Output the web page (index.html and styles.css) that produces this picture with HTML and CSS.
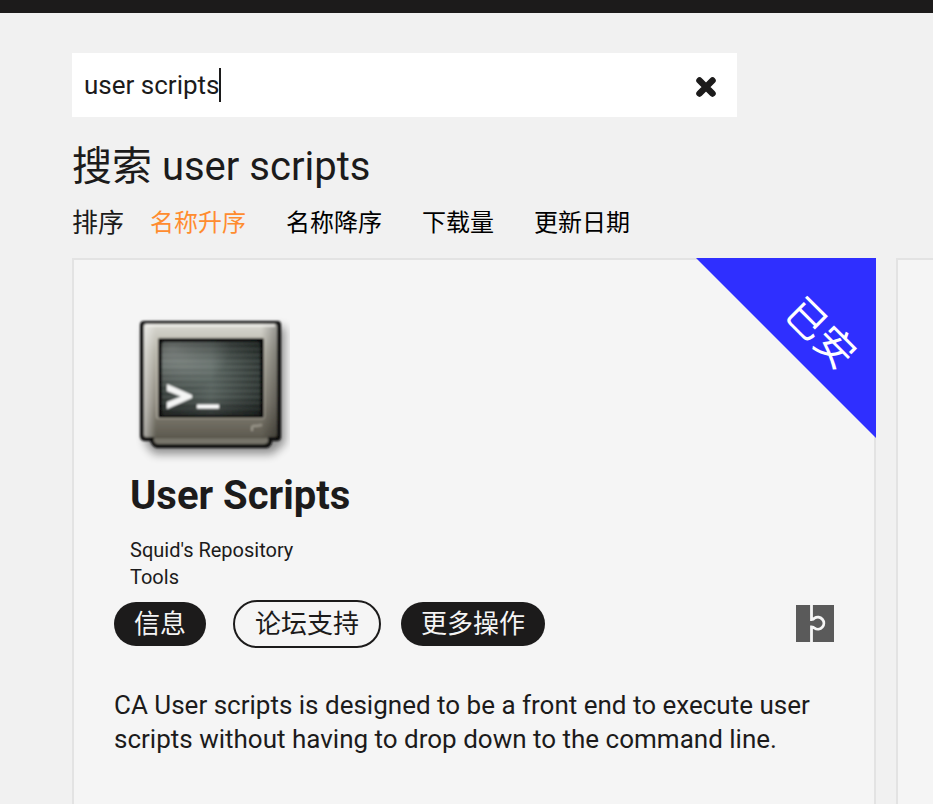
FILE: index.html
```html
<!DOCTYPE html>
<html lang="zh-CN">
<head>
<meta charset="utf-8">
<title>搜索 user scripts</title>
<link rel="stylesheet" href="styles.css">
</head>
<body>
<header class="topbar"></header>
<main class="page">
  <form class="search">
    <input class="search-input" type="text" value="user scripts" aria-label="搜索">
    <span class="caret"></span>
    <button class="clear" type="button" aria-label="清除">
      <svg viewBox="0 0 20 20" width="20" height="20"><path d="M3.500 3.500L16.500 16.500M16.500 3.500L3.500 16.500" stroke="currentColor" stroke-width="6.500" stroke-linecap="round"/></svg>
    </button>
  </form>
  <h1 class="title">搜索 user scripts</h1>
  <nav class="sort">
    <span class="sort-label">排序</span>
    <a class="sort-link active" href="#">名称升序</a>
    <a class="sort-link" href="#">名称降序</a>
    <a class="sort-link" href="#">下载量</a>
    <a class="sort-link" href="#">更新日期</a>
  </nav>
  <section class="cards">
    <article class="card">
      <div class="ribbon"><span class="ribbon-text">已安</span></div>
      <div class="summary">
        <svg class="app-icon" viewBox="0 0 160 160" width="160" height="160" aria-hidden="true">
          <defs>
            <linearGradient id="shell" x1="0" y1="0" x2="0" y2="1"><stop offset="0" stop-color="#d8d7d0"/><stop offset=".25" stop-color="#b5b3a8"/><stop offset=".7" stop-color="#89857a"/><stop offset="1" stop-color="#5e5b50"/></linearGradient>
            <linearGradient id="side" x1="0" y1="0" x2="1" y2="0"><stop offset="0" stop-color="#fff" stop-opacity=".5"/><stop offset=".09" stop-color="#fff" stop-opacity="0"/><stop offset=".88" stop-color="#000" stop-opacity="0"/><stop offset="1" stop-color="#000" stop-opacity=".3"/></linearGradient>
            <linearGradient id="glass" x1="0" y1="0" x2="1" y2="0"><stop offset="0" stop-color="#39413e"/><stop offset=".5" stop-color="#5a6561"/><stop offset="1" stop-color="#2b3330"/></linearGradient>
            <radialGradient id="glare" cx=".1" cy=".08" r=".6"><stop offset="0" stop-color="#c0c6c2" stop-opacity=".6"/><stop offset="1" stop-color="#c0c6c2" stop-opacity="0"/></radialGradient>
            <linearGradient id="fade" x1="0" y1="0" x2="0" y2="1"><stop offset="0" stop-color="#000" stop-opacity=".35"/><stop offset=".3" stop-color="#000" stop-opacity="0"/><stop offset=".75" stop-color="#000" stop-opacity=".08"/><stop offset="1" stop-color="#000" stop-opacity=".5"/></linearGradient>
            <pattern id="lines" width="8" height="6" patternUnits="userSpaceOnUse"><path d="M0 2H8" stroke="#9aa6a0" stroke-opacity=".2" stroke-width="3"/></pattern>
            <filter id="soft" x="-20%" y="-20%" width="140%" height="140%"><feGaussianBlur stdDeviation="5"/></filter>
            <filter id="edge"><feGaussianBlur stdDeviation=".9"/></filter>
          </defs>
          <path d="M15 22H155V138L142 149H24L15 138Z" fill="#000" opacity=".42" filter="url(#soft)"/>
          <g filter="url(#edge)">
            <path d="M14 16H148Q151 16 151 20V132Q151 136 147 136H142V138Q140 143 136 143H27Q23 143 20 136H15Q10 136 10 131V20Q10 16 14 16Z" fill="#10100f"/>
            <rect x="14" y="19" width="133" height="113" rx="2" fill="url(#shell)"/>
            <rect x="14" y="19" width="133" height="113" rx="2" fill="url(#side)"/>
            <path d="M16 20.500H145" stroke="#f3f2ee" stroke-width="2"/>
            <path d="M24 132H138V137Q137 139 134 139H28Q25 139 24 136Z" fill="#77746a"/>
            <path d="M24 132.500H138" stroke="#55524a" stroke-width="1.500"/>
            <rect x="26" y="32" width="109" height="82" rx="2" fill="#cbc8bc" opacity=".5"/>
            <rect x="28" y="33" width="106" height="80" rx="2" fill="#0c0e0d"/>
            <rect x="32" y="37" width="98" height="73" rx="3" fill="url(#glass)"/>
            <rect x="32" y="37" width="98" height="73" rx="3" fill="url(#lines)"/>
            <rect x="32" y="37" width="98" height="73" rx="3" fill="url(#glare)"/>
            <rect x="32" y="37" width="98" height="73" rx="3" fill="url(#fade)"/>
            <path d="M37 79L62 90V93L37 104V97L51 91.500L37 86Z" fill="#f4f5f4"/>
            <path d="M67 101.500H89" stroke="#fff" stroke-width="4"/>
            <path d="M122 126V122Q123 120 126 121L132 120" stroke="#9d998d" stroke-width="2" fill="none"/>
          </g>
        </svg>
        <h2 class="name">User Scripts</h2>
        <p class="meta">Squid's Repository<br>Tools</p>
      </div>
      <div class="actions">
        <button class="btn info" type="button">信息</button>
        <button class="btn outline" type="button">论坛支持</button>
        <button class="btn" type="button">更多操作</button>
        <svg class="plugin" viewBox="0 0 38 38" width="38" height="38" role="img" aria-label="插件">
          <path d="M0 0H38V37H0Z" fill="#5a5a5a"/>
          <path d="M15.500 0V14.500Q17.500 14.500 18.500 13.200A6 6 0 1 1 18.500 23.200Q17.500 22 15.500 22V37" stroke="#f5f5f5" stroke-width="2.800" fill="none"/>
        </svg>
      </div>
      <p class="desc">CA User scripts is designed to be a front end to execute user scripts without having to drop down to the command line.</p>
    </article>
    <article class="card"></article>
  </section>
</main>
</body>
</html>
```
FILE: styles.css
```css
* { box-sizing: border-box; }

body {
  margin: 0;
  min-height: 100vh;
  display: flex;
  flex-direction: column;
  overflow: hidden;
  background: #f1f1f1;
  color: #1c1b1b;
  font-family: Roboto, "Noto Sans CJK SC", sans-serif;
  font-size: 26px;
  line-height: 34px;
}

.topbar { height: 13px; background: #1c1b1b; }

.page {
  flex: 1;
  display: flex;
  flex-direction: column;
  padding: 40px 57px 0 72px;
}

.search {
  display: flex;
  align-items: center;
  max-width: 665px;
  height: 64px;
  padding: 0 21px 0 12px;
  background: #fff;
}

.search-input {
  field-sizing: content;
  padding: 0;
  border: 0;
  outline: 0;
  background: none;
  color: inherit;
  font: inherit;
}

.caret { width: 2px; height: 34px; background: #1c1b1b; }

.clear {
  display: flex;
  margin-left: auto;
  padding: 4px 0 0;
  border: 0;
  background: none;
  color: #1c1b1b;
}

.title {
  margin: 26px 0 0;
  font-size: 40px;
  font-weight: 400;
  line-height: 48px;
}

.sort {
  display: flex;
  align-items: center;
  gap: 40px;
  height: 64px;
}

.sort-label { margin-right: -14px; }

.sort-link { color: #000; font-size: 24px; text-decoration: none; }
.sort-link.active { color: #ff8c2f; }

.cards {
  flex: 1;
  display: grid;
  grid-auto-flow: column;
  grid-auto-columns: 100%;
  gap: 20px;
  margin-top: 3px;
}

.card {
  position: relative;
  padding: 45px 40px;
  border: 2px solid #e3e3e3;
  border-bottom: 0;
  background: #f5f5f5;
}

.ribbon {
  position: absolute;
  top: -2px;
  right: -2px;
  width: 180px;
  height: 180px;
  background: #2f2fff;
  clip-path: polygon(0 0, 100% 0, 100% 100%);
}

.ribbon-text {
  position: absolute;
  top: 52px;
  left: 84px;
  color: #fff;
  font-size: 40px;
  line-height: 48px;
  transform: rotate(45deg);
}

.summary { padding-left: 16px; }

.app-icon { display: block; }

.name {
  margin: 7px 0 0;
  font-size: 40px;
  line-height: 48px;
}

.meta { margin: 17px 0 0; font-size: 20px; line-height: 27px; }

.actions {
  display: flex;
  align-items: center;
  gap: 20px;
  margin-top: 9px;
}

.btn {
  padding: 5px 20px;
  border: 0;
  border-radius: 24px;
  background: #1c1b1b;
  color: #f5f5f5;
  font: inherit;
}

.btn.info { margin-right: 7px; }

.btn.outline { border: 2px solid #1c1b1b; background: none; color: #1c1b1b; }

.plugin { margin-left: auto; }

.desc { margin: 40px 0 0; }
```
